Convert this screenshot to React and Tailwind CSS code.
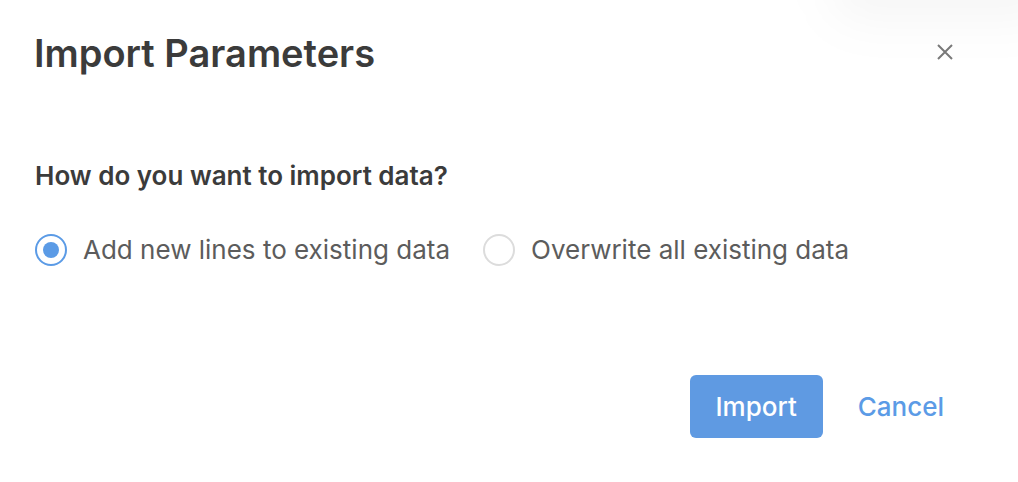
import React from 'react'

function Radio({ checked, label }) {
  return (
    <label className="flex items-center gap-4 cursor-pointer">
      <span
        className={
          checked
            ? 'flex h-8 w-8 items-center justify-center rounded-full border-2 border-[#5b9be6] bg-white'
            : 'flex h-8 w-8 items-center justify-center rounded-full border-2 border-[#dcdcdc] bg-white'
        }
      >
        {checked && <span className="h-4 w-4 rounded-full bg-[#5b9be6]" />}
      </span>
      <span className="text-[26px] leading-[34px] text-[#5c5c5c]">{label}</span>
    </label>
  )
}

export default function App() {
  return (
    <div className="relative h-[482px] w-[1018px] overflow-hidden bg-white font-['Inter',sans-serif]">
      <div className="pointer-events-none absolute -top-12 -right-10 h-[70px] w-[230px] rounded-full bg-black/[0.035] blur-xl" />
      <div className="flex items-start justify-between pl-[34px] pr-[64px] pt-[28px]">
        <h1 className="text-[38px] font-semibold leading-[50px] text-[#3b3b3b]">Import Parameters</h1>
        <button className="mt-[15px] text-[#7a7a7a]">
          <svg width="18" height="18" viewBox="0 0 18 18" fill="none" stroke="currentColor" strokeWidth="2">
            <path d="M2 2L16 16M16 2L2 16" />
          </svg>
        </button>
      </div>
      <div className="pl-[35px] pt-[80px]">
        <p className="text-[26px] font-semibold leading-[36px] text-[#3b3b3b]">How do you want to import data?</p>
        <div className="mt-[39px] flex items-center gap-[33px]">
          <Radio checked label="Add new lines to existing data" />
          <Radio label="Overwrite all existing data" />
        </div>
      </div>
      <div className="mt-[108px] flex items-center justify-end gap-[35px] pr-[74px]">
        <button className="h-[63px] w-[133px] rounded-md bg-[#5f9ae2] text-[26px] font-medium text-white">Import</button>
        <button className="text-[26px] font-medium text-[#5b9be6]">Cancel</button>
      </div>
    </div>
  )
}
